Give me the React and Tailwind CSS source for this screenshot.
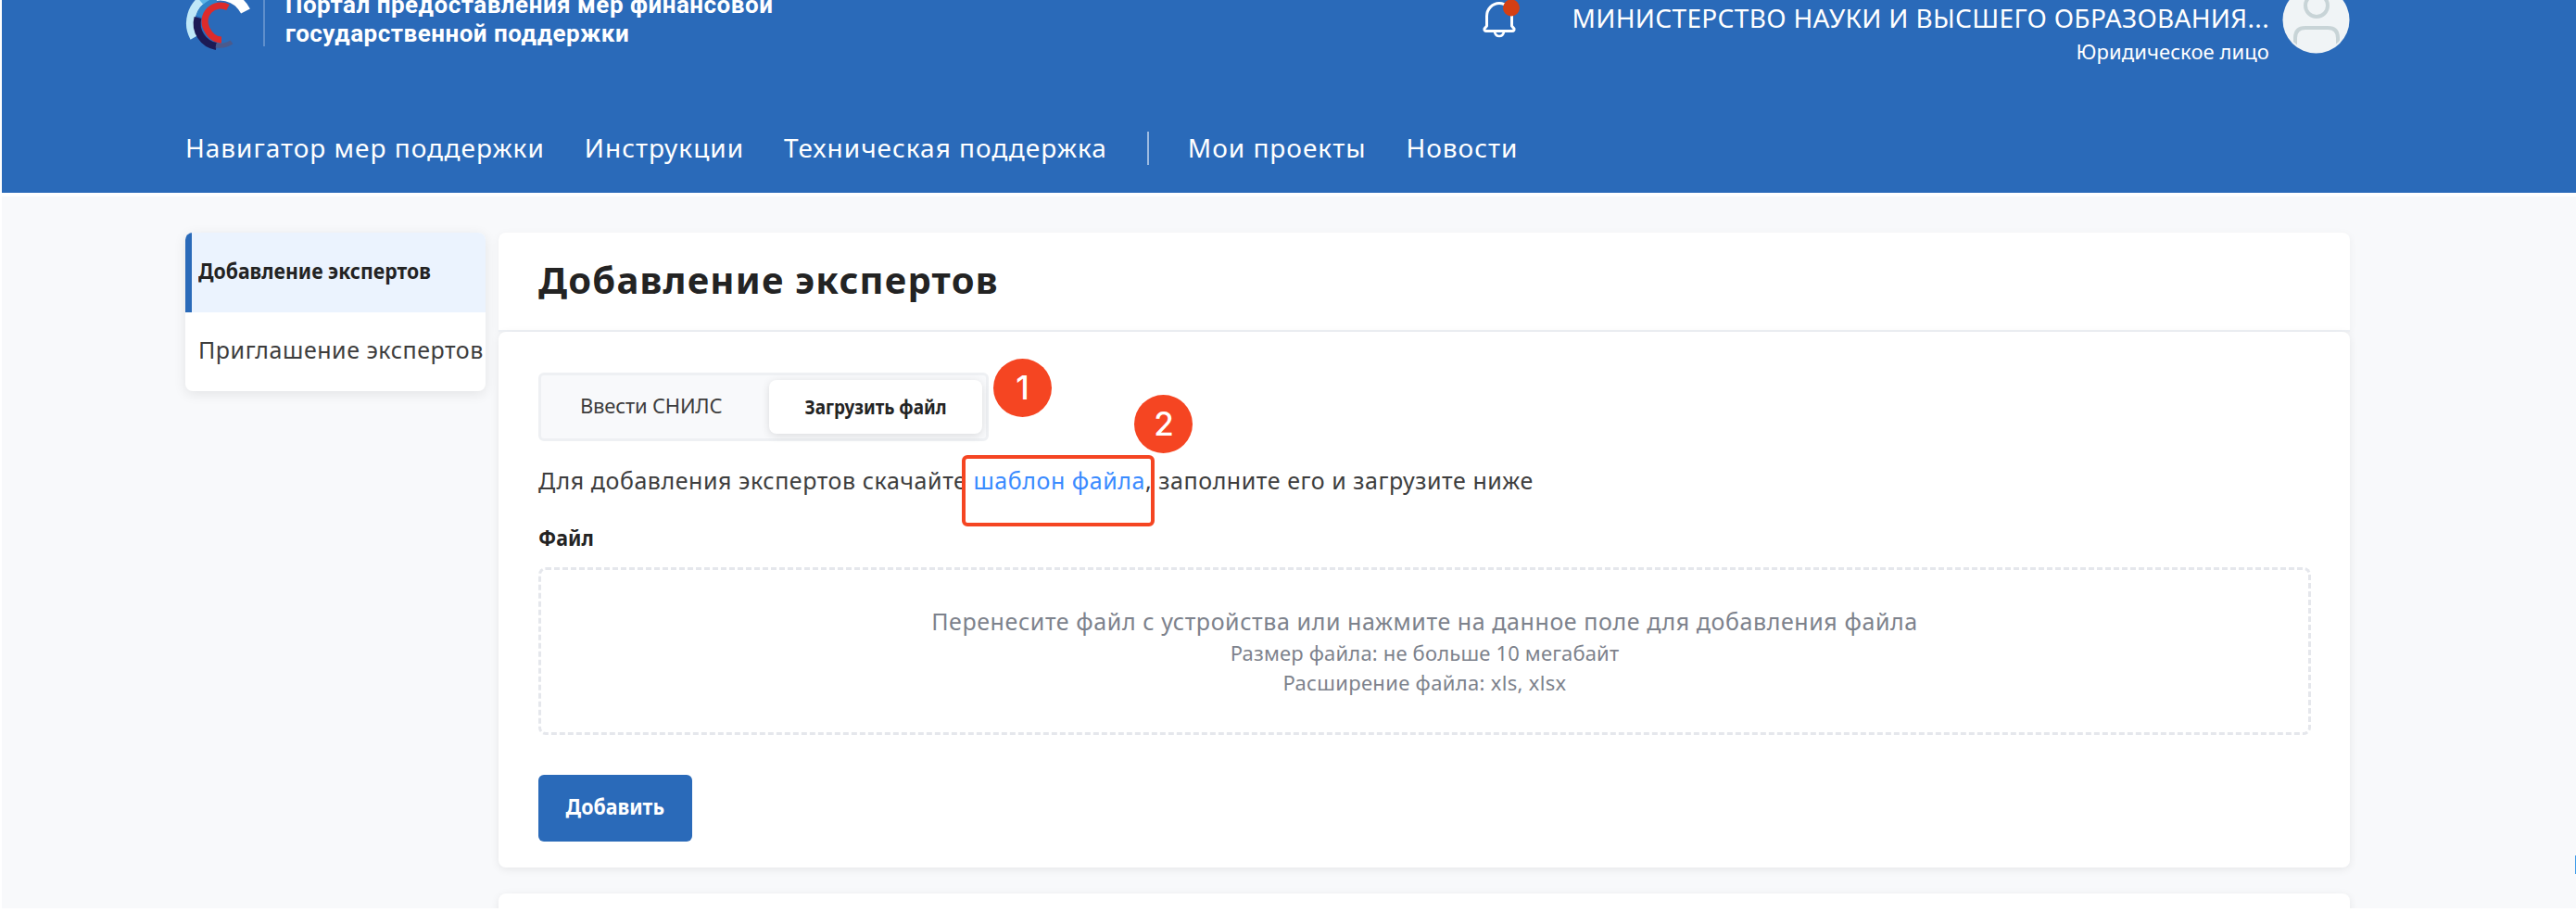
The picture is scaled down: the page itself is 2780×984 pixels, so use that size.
function Logo() {
  return (
    <svg width="72" height="72" viewBox="0 0 72 72" fill="none" className="shrink-0">
      <path d="M9.500 55.500A32 32 0 0 1 22 12" stroke="#bfe8f8" strokeWidth="9" />
      <path d="M17 17A32 32 0 0 1 34 9.500" stroke="#5db4e6" strokeWidth="9" />
      <path d="M32 10.500A31 31 0 0 1 65 27" stroke="#ffffff" strokeWidth="11" />
      <path d="M15 33A25 25 0 0 1 34 16" stroke="#2f83c8" strokeWidth="7" />
      <path d="M13.500 34A25 25 0 0 0 33.500 65" stroke="#1c1a55" strokeWidth="8" />
      <path d="M33 64A24 24 0 0 0 50 60.500" stroke="#4b5a8c" strokeWidth="5" />
      <path d="M46 23A17 17 0 0 0 23 46Q29 58 39 58" stroke="#dc2b2b" strokeWidth="7" />
    </svg>
  );
}

function Bell() {
  return (
    <svg width="42" height="42" viewBox="0 0 42 42" fill="none" className="shrink-0">
      <path
        d="M5.500 28V17.500A13.500 14 0 0 1 32.500 17.500V28L35 31Q35.500 33.500 33 33.500H5Q2.500 33.500 3 31Z"
        stroke="#ffffff"
        strokeWidth="3"
        strokeLinejoin="round"
      />
      <path d="M14 34.500Q15 39 19 39T24 34.500" stroke="#ffffff" strokeWidth="2.600" />
      <circle cx="32" cy="8.500" r="9" fill="#d43f14" />
    </svg>
  );
}

function Avatar() {
  return (
    <svg width="73" height="73" viewBox="0 0 73 73" fill="none" className="ml-[14px] shrink-0">
      <defs>
        <clipPath id="avatar">
          <circle cx="36.500" cy="36.500" r="34" />
        </clipPath>
      </defs>
      <circle cx="36.500" cy="36.500" r="36" fill="#f0f4f6" />
      <g clipPath="url(#avatar)" stroke="#c8d4d7" strokeWidth="4">
        <circle cx="37" cy="21" r="12" />
        <path d="M14 66V56Q14 45 25 45H49Q60 45 60 56V66" />
      </g>
    </svg>
  );
}

function Callout({ children, className }) {
  return (
    <span
      className={`absolute flex size-[63px] items-center justify-center rounded-full bg-[#f54522] font-[Inter,sans-serif] text-[35px] font-medium leading-none tracking-normal text-white ${className}`}
    >
      {children}
    </span>
  );
}

function Header() {
  return (
    <header className="h-[208px] shrink-0 overflow-hidden bg-[#2a6ab9] text-white">
      <div className="-mt-[30px] ml-[198px] flex w-[2336px] flex-col">
        <div className="flex h-[102px] items-center">
          <Logo />
          <div className="ml-[12px] h-[57px] w-[2px] bg-[#5f8fcc]" />
          <p className="ml-[22px] font-[Roboto,sans-serif] text-[26px] font-bold leading-[31px] tracking-[0.5px]">
            Портал предоставления мер финансовой
            <br />
            государственной поддержки
          </p>
          <div className="ml-auto flex items-center">
            <Bell />
            <div className="ml-[55px] mt-[31px] text-right">
              <p className="text-[28px] leading-9 tracking-[0.32px]">МИНИСТЕРСТВО НАУКИ И ВЫСШЕГО ОБРАЗОВАНИЯ...</p>
              <p className="text-[22px] leading-[36px] tracking-[0.080px]">Юридическое лицо</p>
            </div>
            <Avatar />
          </div>
        </div>
        <nav className="mt-[67px] flex h-10 items-center gap-[43px] text-[28px] tracking-[0.98px]">
          <a>Навигатор мер поддержки</a>
          <a>Инструкции</a>
          <a>Техническая поддержка</a>
          <span className="mt-[2px] h-9 w-[2px] bg-[#9dbbe1]" />
          <a className="-ml-[1px]">Мои проекты</a>
          <a>Новости</a>
        </nav>
      </div>
    </header>
  );
}

function Sidebar() {
  return (
    <aside className="h-[171px] w-[324px] shrink-0 overflow-hidden rounded-lg bg-white shadow-[0_3px_14px_rgba(0,0,0,0.09)]">
      <div className="h-[86px] whitespace-nowrap border-l-[7px] border-[#2a6ab9] bg-[#ebf3fe] pl-[7px] text-[24px] font-bold leading-[81px]">
        <span className="inline-block origin-left scale-x-[0.885]">Добавление экспертов</span>
      </div>
      <div className="h-[85px] whitespace-nowrap pl-[14px] text-[25px] leading-[81px] tracking-[0.53px] text-[#3d3d3d]">
        Приглашение экспертов
      </div>
    </aside>
  );
}

function Tabs() {
  return (
    <div className="relative flex h-[74px] w-[486px] items-center rounded-md border-[3px] border-[#eef0f3] bg-[#f8f9fb] text-[22px] leading-none">
      <div className="w-[243px] pb-[4px] pl-[42px] tracking-[-0.2px] text-[#3d3d3d]">Ввести СНИЛС</div>
      <div className="ml-[3px] flex h-[58px] w-[230px] items-center justify-center rounded-lg bg-white pb-[3px] text-[22px] font-bold shadow-[0_2px_10px_rgba(0,0,0,0.12)]">
        <span className="inline-block scale-x-[0.86]">Загрузить файл</span>
      </div>
      <Callout className="-top-[18px] left-[488px]">1</Callout>
    </div>
  );
}

function UploadCard() {
  return (
    <section className="flex h-[578px] flex-col items-start rounded-lg bg-white pl-[43px] pt-[44px] shadow-[0_2px_10px_rgba(0,0,0,0.08)]">
      <Tabs />
      <p className="mt-[24px] whitespace-nowrap text-[25px] leading-9 tracking-[0.55px] text-[#3d3d3d]">
        Для добавления экспертов скачайте{" "}
        <span className="relative text-[#3a8bff]">
          шаблон файла
          <span className="absolute -left-[12px] -top-[10px] h-[77px] w-[208px] rounded-md border-4 border-[#f54522]" />
          <Callout className="-top-[75px] left-[174px]">2</Callout>
        </span>
        , заполните его и загрузите ниже
      </p>
      <p className="mt-[29px] text-[24px] font-bold leading-[30px]">
        <span className="inline-block origin-left scale-x-[0.89]">Файл</span>
      </p>
      <div className="mt-[17px] h-[181px] w-[1913px] rounded-lg border-[3px] border-dashed border-[#e5e7ec] pt-[38px] text-center text-[#7d828c]">
        <p className="text-[25px] leading-[34px] tracking-[0.580px]">
          Перенесите файл с устройства или нажмите на данное поле для добавления файла
        </p>
        <p className="text-[22px] leading-[34px] tracking-[0.170px]">Размер файла: не больше 10 мегабайт</p>
        <p className="text-[22px] leading-[31px] tracking-[0.320px]">Расширение файла: xls, xlsx</p>
      </div>
      <button className="mt-[43px] h-[72px] w-[166px] rounded-md bg-[#2a6ab9] pb-[4px] text-[24px] font-bold text-white">
        <span className="inline-block scale-x-[0.89]">Добавить</span>
      </button>
    </section>
  );
}

export default function App() {
  return (
    <div className="h-[984px] w-[2780px] overflow-hidden bg-white pb-1 pl-[2px] font-['Noto_Sans',sans-serif] text-[#232323]">
      <div className="flex h-[980px] flex-col overflow-hidden bg-[#f8f9fb]">
        <Header />
        <div className="h-1 shrink-0 bg-white" />
        <div className="flex flex-1 items-start">
          <main className="ml-[198px] mt-[39px] flex items-start gap-[14px]">
            <Sidebar />
            <div className="w-[1998px]">
              <h1 className="h-[107px] rounded-t-lg border-b-2 border-[#eef1f5] bg-white pl-[43px] text-[40px] font-bold leading-[101px] tracking-[1.220px] shadow-[0_2px_10px_rgba(0,0,0,0.05)]">
                Добавление экспертов
              </h1>
              <UploadCard />
              <section className="mt-7 h-[40px] rounded-lg bg-white shadow-[0_2px_10px_rgba(0,0,0,0.08)]" />
            </div>
          </main>
          <span className="ml-auto mt-[711px] h-5 w-px bg-[#3f9be8]" />
        </div>
      </div>
    </div>
  );
}
